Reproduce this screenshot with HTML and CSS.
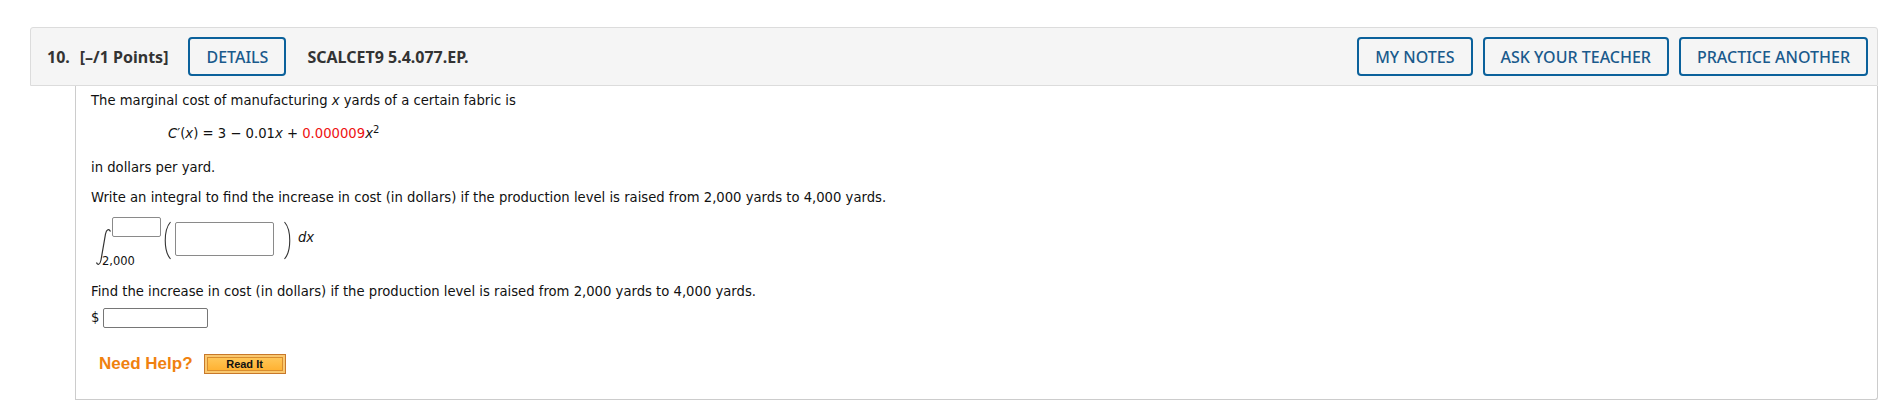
FILE: index.html
```html
<!DOCTYPE html>
<html lang="en">
<head>
<meta charset="utf-8">
<title>Question 10</title>
<link rel="stylesheet" href="styles.css">
</head>
<body>
<div class="question">
  <div class="qheader">
    <span class="qnum">10.</span>
    <span class="points">[–/1 Points]</span>
    <button class="btn">DETAILS</button>
    <span class="code">SCALCET9 5.4.077.EP.</span>
    <div class="actions">
      <button class="btn">MY NOTES</button>
      <button class="btn">ASK YOUR TEACHER</button>
      <button class="btn">PRACTICE ANOTHER</button>
    </div>
  </div>
  <div class="qbody">
    <p class="line first">The marginal cost of manufacturing <i>x</i> yards of a certain fabric is</p>
    <p class="line formula"><i>C</i>′(<i>x</i>) = 3 − 0.01<i>x</i> + <span class="red">0.000009</span><i>x</i><sup>2</sup></p>
    <p class="line dollars">in dollars per yard.</p>
    <p class="line write">Write an integral to find the increase in cost (in dollars) if the production level is raised from 2,000 yards to 4,000 yards.</p>
    <div class="integral">
      <svg class="int-sign" width="17" height="38" viewBox="0 0 17 38"><path d="M1.5 34.5 C2.5 37.5 5 37 6 32 L10.5 6 C11.5 1 14 0.5 15.5 3.5" fill="none" stroke="#333" stroke-width="1.2"/></svg>
      <div class="limits">
        <span class="box small"></span>
        <span class="lower">2,000</span>
      </div>
      <svg class="paren" width="10" height="39" viewBox="0 0 10 39"><path d="M8.5 1 C1.5 9 1.5 30 8.5 38" fill="none" stroke="#333" stroke-width="1.1"/></svg>
      <span class="box big"></span>
      <svg class="paren right" width="10" height="39" viewBox="0 0 10 39"><path d="M1.5 1 C8.5 9 8.5 30 1.5 38" fill="none" stroke="#333" stroke-width="1.1"/></svg>
      <span class="dx"><i>dx</i></span>
    </div>
    <p class="line find">Find the increase in cost (in dollars) if the production level is raised from 2,000 yards to 4,000 yards.</p>
    <div class="answer"><span>$</span><span class="box ans"></span></div>
    <div class="help">
      <span class="needhelp">Need Help?</span>
      <span class="readit"><span class="readit-inner">Read It</span></span>
    </div>
  </div>
</div>
</body>
</html>
```
FILE: styles.css
```css
body {
  margin: 0;
  background: #fff;
}
.question {
  margin: 27px 15px 0 30px;
}
.qheader {
  display: flex;
  align-items: center;
  height: 59px;
  box-sizing: border-box;
  background: #f5f5f5;
  border: 1px solid #dcdcdc;
  border-radius: 3px 3px 0 0;
  padding: 0 9px 0 16px;
  font-family: "Noto Sans", "Open Sans", sans-serif;
  font-size: 16px;
  color: #333;
}
.qnum {
  font-weight: 700;
  margin-right: 10px;
}
.points {
  font-weight: 700;
  margin-right: 20px;
}
.code {
  font-weight: 700;
  margin-left: 21px;
}
.btn {
  height: 39px;
  box-sizing: border-box;
  border: 2px solid #0b619b;
  border-radius: 4px;
  background: transparent;
  padding: 0 16px;
  font-family: "Noto Sans", "Open Sans", sans-serif;
  font-size: 16px;
  font-weight: 500;
  color: #1a5a8c;
  display: flex;
  align-items: center;
}
.actions {
  margin-left: auto;
  display: flex;
  gap: 10px;
}
.qbody {
  margin-left: 45px;
  border: 1px solid #cccccc;
  border-top: none;
  border-radius: 0 0 3px 0;
  padding: 7px 16px 25px 15px;
  font-family: "DejaVu Sans", Verdana, sans-serif;
  font-size: 13.2px;
  line-height: 16px;
  color: #111;
}
.line {
  margin: 0;
}
.formula {
  margin-top: 17px;
  padding-left: 77px;
}
.formula sup {
  font-size: 10px;
  line-height: 0;
}
.red {
  color: #ee1111;
}
.dollars {
  margin-top: 18px;
}
.write {
  margin-top: 14px;
}
.integral {
  display: flex;
  align-items: flex-start;
  margin-top: 11px;
  height: 52px;
}
.int-sign {
  margin-top: 11px;
  margin-left: 4px;
}
.limits {
  display: flex;
  flex-direction: column;
  align-items: flex-start;
}
.box {
  display: block;
  box-sizing: border-box;
  border: 1px solid #8a8a8a;
  border-radius: 2px;
  background: #fff;
}
.small {
  width: 49px;
  height: 20px;
}
.lower {
  font-size: 11.5px;
  line-height: 13px;
  margin-top: 18px;
  margin-left: -10px;
}
.paren {
  margin-top: 4px;
  margin-left: 1px;
}
.big {
  width: 99px;
  height: 34px;
  margin-top: 5px;
  margin-left: 3px;
}
.paren.right {
  margin-left: 9px;
}
.dx {
  margin-top: 13px;
  margin-left: 5px;
}
.find {
  margin-top: 15px;
}
.answer {
  display: flex;
  align-items: center;
  gap: 4px;
  margin-top: 8px;
}
.ans {
  width: 105px;
  height: 20px;
  border-color: #767676;
}
.help {
  display: flex;
  align-items: center;
  margin-top: 26px;
  margin-left: 8px;
}
.needhelp {
  font-family: "Liberation Sans", Arial, sans-serif;
  font-weight: 700;
  font-size: 17px;
  color: #f0810f;
  margin-right: 11px;
}
.readit {
  display: block;
  width: 82px;
  height: 20px;
  box-sizing: border-box;
  border: 1px solid #c8782a;
  background: #f9c870;
  padding: 2px;
}
.readit-inner {
  display: flex;
  align-items: center;
  justify-content: center;
  height: 100%;
  box-sizing: border-box;
  border: 1px solid #d98d2e;
  background: linear-gradient(#ffc657, #ffb233);
  font-family: "Liberation Sans", Arial, sans-serif;
  font-weight: 700;
  font-size: 11px;
  color: #111;
}
```
